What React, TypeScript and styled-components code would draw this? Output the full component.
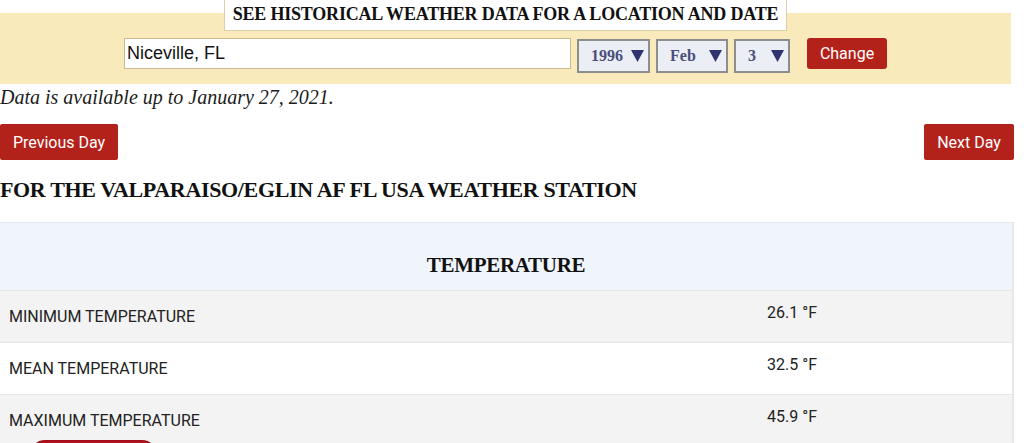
import React from "react";
import styled, { createGlobalStyle } from "styled-components";

const GlobalStyle = createGlobalStyle`
  html, body { margin: 0; padding: 0; background: #ffffff; }
  body { font-family: Roboto, "Liberation Sans", sans-serif; color: #1a1a1a; }
  * { box-sizing: border-box; }
`;

const Page = styled.div`
  width: 1014px;
  display: flex;
  flex-direction: column;
`;

const SearchPanel = styled.section`
  margin-top: 13px;
  width: 1011px;
  height: 71px;
  background: #f9eabb;
  display: flex;
  flex-direction: column;
  align-items: center;
`;

const PanelTitle = styled.h1`
  margin: -13px 0 0 0;
  height: 31px;
  padding: 0 8px 3px;
  background: #ffffff;
  border: 1px solid #dccfa8;
  border-top: none;
  font-family: "Liberation Serif", "Times New Roman", serif;
  font-weight: 700;
  font-size: 18px;
  line-height: 28px;
  letter-spacing: -0.2px;
  color: #111;
  white-space: nowrap;
`;

const FormRow = styled.div`
  margin-top: 7px;
  display: flex;
  align-items: flex-start;
  gap: 6px;
`;

const LocationInput = styled.div`
  width: 447px;
  height: 31px;
  background: #ffffff;
  border: 1px solid #c9bb8e;
  padding: 0 2px;
  display: flex;
  align-items: center;
  font-family: "Liberation Sans", Arial, sans-serif;
  font-size: 18px;
  color: #111;
`;

const FakeSelect = styled.div<{ $w: number }>`
  width: ${(p) => p.$w}px;
  height: 34px;
  margin-top: 1px;
  background: #eceef5;
  border: 2px solid #8d8d8d;
  display: flex;
  align-items: center;
  justify-content: space-between;
  padding: 0 4px 0 12px;
  font-family: "Liberation Serif", "Times New Roman", serif;
  font-weight: 700;
  font-size: 16px;
  color: #4a4e7c;
`;

const RedButton = styled.button<{ $w: number; $h: number }>`
  width: ${(p) => p.$w}px;
  height: ${(p) => p.$h}px;
  background: #b3221a;
  color: #ffffff;
  border: none;
  border-radius: 2px;
  padding: 0;
  font-family: Roboto, "Liberation Sans", sans-serif;
  font-size: 16px;
  display: flex;
  align-items: center;
  justify-content: center;
  cursor: pointer;
`;

const ChangeButton = styled(RedButton)`
  margin-left: 11px;
  border-radius: 3px;
`;

const Availability = styled.p`
  margin: 0;
  font-family: "Liberation Serif", "Times New Roman", serif;
  font-style: italic;
  font-size: 20px;
  line-height: 26px;
  color: #1c1c1c;
`;

const NavRow = styled.div`
  margin-top: 14px;
  display: flex;
  justify-content: space-between;
`;

const StationHeading = styled.h2`
  margin: 15px 0 0 0;
  font-family: "Liberation Serif", "Times New Roman", serif;
  font-weight: 700;
  font-size: 22px;
  line-height: 30px;
  letter-spacing: -0.35px;
  color: #111;
  white-space: nowrap;
`;

const Table = styled.div`
  margin-top: 17px;
  width: 1014px;
  border-right: 2px solid #e8e8e8;
  border-top: 1px solid #e6ebf1;
`;

const TableHeader = styled.div`
  height: 67px;
  background: #f0f5fb;
  padding-top: 32px;
  text-align: center;
  font-family: "Liberation Serif", "Times New Roman", serif;
  font-weight: 700;
  font-size: 21px;
  line-height: 21px;
  letter-spacing: -0.3px;
  color: #111;
`;

const Row = styled.div<{ $alt: boolean }>`
  display: grid;
  grid-template-columns: 758px 1fr;
  min-height: 52px;
  background: ${(p) => (p.$alt ? "#f3f3f3" : "#ffffff")};
  border-top: 1px solid #e6e6e6;
`;

const LabelCell = styled.div`
  padding: 16px 9px 0;
  display: flex;
  flex-direction: column;
  align-items: flex-start;
  font-family: Roboto, "Liberation Sans", sans-serif;
  font-size: 16px;
  line-height: 20px;
  color: #222;
`;

const ValueCell = styled.div`
  padding: 12px 9px 0;
  font-family: Roboto, "Liberation Sans", sans-serif;
  font-size: 16px;
  line-height: 20px;
  color: #222;
`;

const PillButton = styled.span`
  margin: 9px 0 0 21px;
  width: 127px;
  height: 30px;
  border-radius: 15px;
  background: #c0141f;
  border-top: 2px solid #a30f18;
`;

const Arrow = () => (
  <svg width="13" height="12" viewBox="0 0 13 12">
    <polygon points="0,0 13,0 6.5,12" fill="#2f3370" />
  </svg>
);

const rows = [
  { label: "MINIMUM TEMPERATURE", value: "26.1 °F" },
  { label: "MEAN TEMPERATURE", value: "32.5 °F" },
  { label: "MAXIMUM TEMPERATURE", value: "45.9 °F" },
];

export default function App() {
  return (
    <>
      <GlobalStyle />
      <Page>
        <SearchPanel>
          <PanelTitle>SEE HISTORICAL WEATHER DATA FOR A LOCATION AND DATE</PanelTitle>
          <FormRow>
            <LocationInput>Niceville, FL</LocationInput>
            <FakeSelect $w={73}>
              <span>1996</span>
              <Arrow />
            </FakeSelect>
            <FakeSelect $w={72}>
              <span>Feb</span>
              <Arrow />
            </FakeSelect>
            <FakeSelect $w={56}>
              <span>3</span>
              <Arrow />
            </FakeSelect>
            <ChangeButton $w={80} $h={31}>Change</ChangeButton>
          </FormRow>
        </SearchPanel>
        <Availability>Data is available up to January 27, 2021.</Availability>
        <NavRow>
          <RedButton $w={118} $h={36}>Previous Day</RedButton>
          <RedButton $w={90} $h={36}>Next Day</RedButton>
        </NavRow>
        <StationHeading>FOR THE VALPARAISO/EGLIN AF FL USA WEATHER STATION</StationHeading>
        <Table>
          <TableHeader>TEMPERATURE</TableHeader>
          {rows.map((r, i) => (
            <Row key={r.label} $alt={i % 2 === 0}>
              <LabelCell>
                {r.label}
                {i === rows.length - 1 && <PillButton />}
              </LabelCell>
              <ValueCell>{r.value}</ValueCell>
            </Row>
          ))}
        </Table>
      </Page>
    </>
  );
}
